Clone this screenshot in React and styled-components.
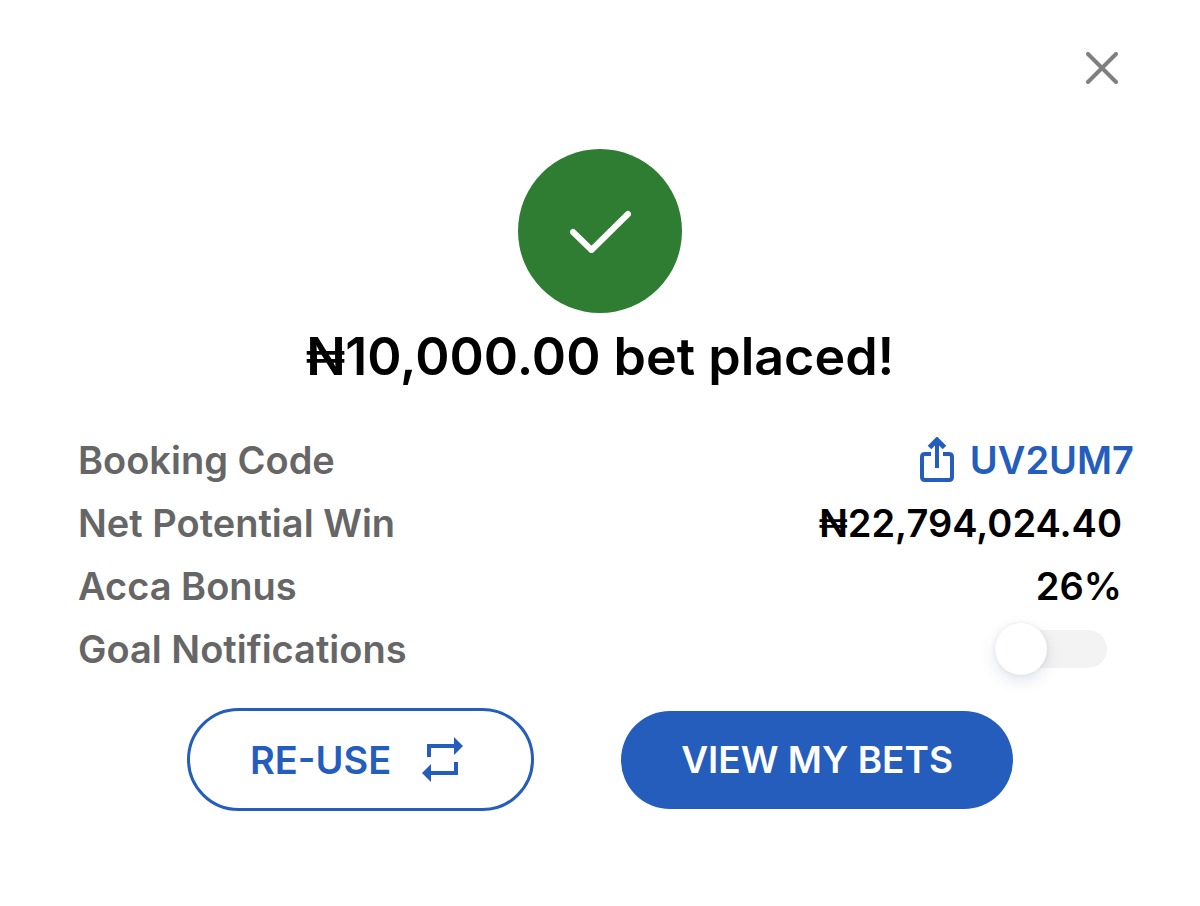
import React, { useState } from 'react';
import styled, { createGlobalStyle } from 'styled-components';

const colors = {
  primary: '#245dbc',
  success: '#2e7d32',
  label: '#666666',
  close: '#808080',
  track: '#f3f3f3',
};

const GlobalStyle = createGlobalStyle`
  *, *::before, *::after {
    box-sizing: border-box;
  }

  body {
    background: #ffffff;
    color: #000000;
    font-family: Inter, 'Liberation Sans', sans-serif;
    margin: 0;
  }

  button {
    cursor: pointer;
    font-family: inherit;
  }
`;

const Dialog = styled.main`
  display: flex;
  flex-direction: column;
  padding: 44px 66px 64px 78px;
`;

const CloseButton = styled.button`
  align-self: flex-end;
  background: none;
  border: none;
  display: flex;
  margin-right: 8px;
  padding: 8px;
`;

const Summary = styled.header`
  align-items: center;
  display: flex;
  flex-direction: column;
  margin-top: 57px;
  padding-right: 12px;
`;

const Badge = styled.div`
  align-items: center;
  background: ${colors.success};
  border-radius: 50%;
  display: flex;
  height: 164px;
  justify-content: center;
  width: 164px;
`;

const Title = styled.h1`
  font-size: 52px;
  font-weight: 600;
  line-height: 88px;
  margin: 0;
`;

const Details = styled.dl`
  margin: 27px 0 0;
`;

const Row = styled.div`
  align-items: center;
  display: flex;
  font-size: 38px;
  font-weight: 600;
  height: 63px;
  justify-content: space-between;
`;

const Label = styled.dt`
  color: ${colors.label};
`;

const Value = styled.dd`
  margin: 0;
  padding-right: ${({ $inset }) => $inset || 0}px;
`;

const CodeLink = styled.a`
  align-items: center;
  color: ${colors.primary};
  display: flex;
  gap: 16px;
  text-decoration: none;
`;

const Switch = styled.input`
  align-items: center;
  appearance: none;
  background: ${colors.track};
  border-radius: 19px;
  cursor: pointer;
  display: flex;
  height: 38px;
  margin: 0;
  width: 112px;

  &::before {
    background: #ffffff;
    border-radius: 50%;
    box-shadow: 0 6px 16px rgba(60, 70, 130, 0.14), 0 0 4px rgba(0, 0, 0, 0.08);
    content: '';
    flex: none;
    height: 52px;
    width: 52px;
  }

  &:checked {
    background: ${colors.primary};
    justify-content: flex-end;
  }
`;

const Actions = styled.footer`
  align-items: center;
  display: flex;
  gap: 87px;
  justify-content: center;
  margin-top: 28px;
  padding-right: 12px;
`;

const Button = styled.button`
  align-items: center;
  background: ${({ $filled }) => $filled ? colors.primary : 'transparent'};
  border: ${({ $filled }) => $filled ? 'none' : `3px solid ${colors.primary}`};
  border-radius: 52px;
  color: ${({ $filled }) => $filled ? '#ffffff' : colors.primary};
  display: flex;
  font-size: ${({ $filled }) => $filled ? 37 : 38}px;
  font-weight: 600;
  gap: 31px;
  height: ${({ $filled }) => $filled ? 98 : 103}px;
  padding: ${({ $filled }) => $filled ? '0 60px' : '0 68px 0 60px'};
  white-space: nowrap;
`;

const CloseIcon = () => (
  <svg width="32" height="32" viewBox="0 0 32 32" fill="none" stroke={colors.close} strokeWidth="4" strokeLinecap="round" aria-hidden="true">
    <path d="M2 2 30 30M30 2 2 30" />
  </svg>
);

const CheckIcon = () => (
  <svg width="62" height="44" viewBox="0 0 62 44" fill="none" stroke="#ffffff" strokeWidth="6" strokeLinecap="round" strokeLinejoin="round" aria-hidden="true">
    <path d="M4 23 22.500 41 59 5" />
  </svg>
);

const ShareIcon = () => (
  <svg width="34" height="46" viewBox="0 0 34 46" fill="none" stroke={colors.primary} strokeWidth="4" aria-hidden="true">
    <path d="M11 17H5Q2 17 2 20V40Q2 43 5 43H29Q32 43 32 40V20Q32 17 29 17H23" />
    <path d="M17 31V4" />
    <path d="M9.500 10.500 17 3 24.500 10.500" strokeWidth="5" />
  </svg>
);

const RepeatIcon = () => (
  <svg width="41" height="45" viewBox="0 0 41 45" fill={colors.primary} aria-hidden="true">
    <path d="M5 20V7H32V0L41 9 32 18V11H9V20Z" />
    <path d="M36 25V38H9V45L0 36 9 27V34H32V25Z" />
  </svg>
);

const App = () => {
  const [notify, setNotify] = useState(false);

  return (
    <>
      <GlobalStyle />
      <Dialog>
        <CloseButton type="button" aria-label="Close">
          <CloseIcon />
        </CloseButton>
        <Summary>
          <Badge>
            <CheckIcon />
          </Badge>
          <Title>₦10,000.00 bet placed!</Title>
        </Summary>
        <Details>
          <Row>
            <Label>Booking Code</Label>
            <Value>
              <CodeLink href="#booking-code">
                <ShareIcon />
                UV2UM7
              </CodeLink>
            </Value>
          </Row>
          <Row>
            <Label>Net Potential Win</Label>
            <Value $inset={12}>₦22,794,024.40</Value>
          </Row>
          <Row>
            <Label>Acca Bonus</Label>
            <Value $inset={12}>26%</Value>
          </Row>
          <Row>
            <Label>
              <label htmlFor="goal-notifications">Goal Notifications</label>
            </Label>
            <Value $inset={27}>
              <Switch
                id="goal-notifications"
                type="checkbox"
                role="switch"
                checked={notify}
                onChange={(e) => setNotify(e.target.checked)}
              />
            </Value>
          </Row>
        </Details>
        <Actions>
          <Button type="button">
            RE-USE
            <RepeatIcon />
          </Button>
          <Button type="button" $filled>
            VIEW MY BETS
          </Button>
        </Actions>
      </Dialog>
    </>
  );
};

export default App;
